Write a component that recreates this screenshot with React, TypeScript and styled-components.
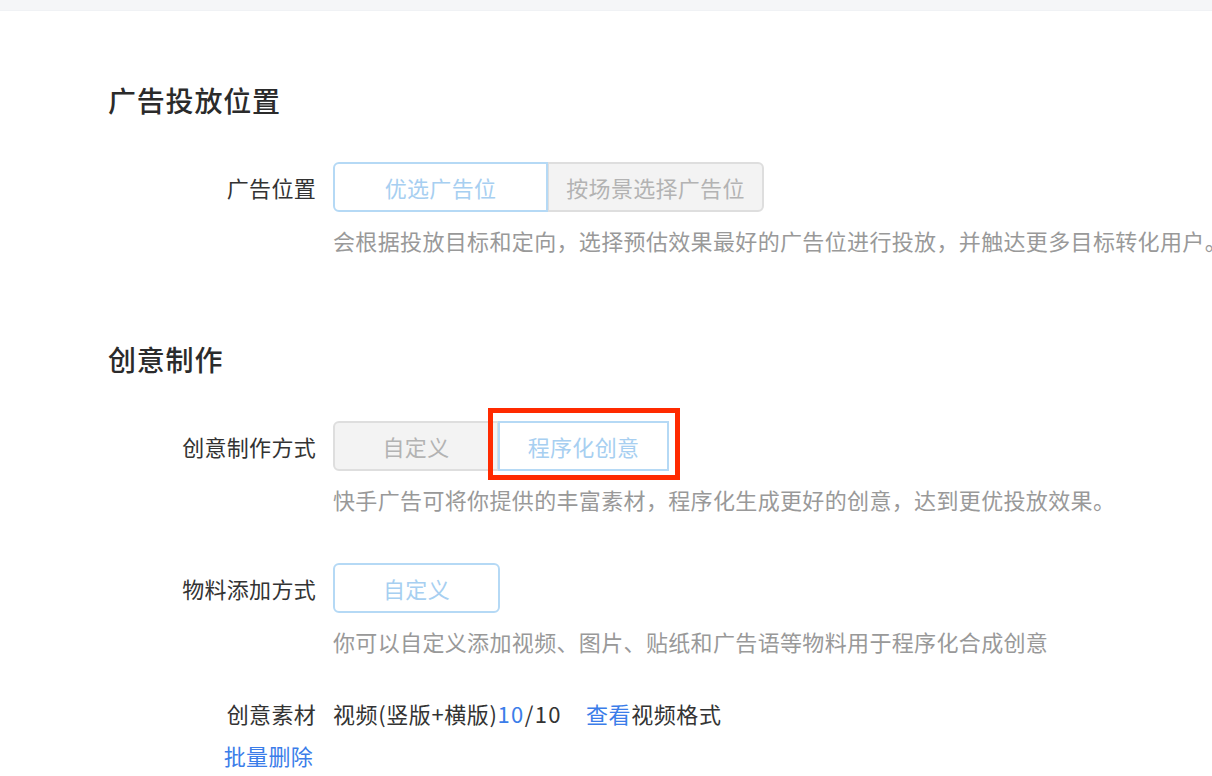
import React from "react";
import styled, { createGlobalStyle } from "styled-components";

const GlobalStyle = createGlobalStyle`
  html, body {
    margin: 0;
    padding: 0;
    background: #ffffff;
    font-family: "Noto Sans CJK SC", "Noto Sans", "Liberation Sans", sans-serif;
    color: #333333;
  }
  * {
    box-sizing: border-box;
  }
`;

const Page = styled.div`
  width: 1212px;
  height: 776px;
  overflow: hidden;
`;

const TopBar = styled.div`
  height: 11px;
  background: #f5f6f8;
  border-bottom: 1px solid #f0f2f5;
`;

const Content = styled.div`
  padding: 69px 0 0 108px;
`;

const Section = styled.section`
  margin-bottom: 84px;
`;

const Title = styled.h2`
  margin: 0 0 42px;
  font-size: 28px;
  line-height: 40px;
  font-weight: 500;
  letter-spacing: 0.8px;
  color: #2b2b2b;
`;

const FormItem = styled.div<{ $gap?: number }>`
  display: flex;
  margin-bottom: ${(p) => p.$gap ?? 0}px;
`;

const Label = styled.div<{ $link?: boolean }>`
  width: 208px;
  flex-shrink: 0;
  text-align: right;
  font-size: 22px;
  line-height: 50px;
  letter-spacing: 0.3px;
  padding-right: ${(p) => (p.$link ? 3 : 0)}px;
  color: ${(p) => (p.$link ? "#3b7de9" : "#333333")};
  white-space: nowrap;
`;

const TextLabel = styled(Label)`
  line-height: 30px;
`;

const Body = styled.div`
  margin-left: 17px;
  display: flex;
  flex-direction: column;
`;

const Group = styled.div`
  display: flex;
`;

const OptionWrap = styled.div`
  position: relative;
  display: flex;
  & + & {
    margin-left: -1px;
  }
`;

const Option = styled.div<{ $active?: boolean; $w: number; $pos: "first" | "last" | "only" | "mid" }>`
  width: ${(p) => p.$w}px;
  height: 50px;
  display: flex;
  align-items: center;
  justify-content: center;
  font-size: 22px;
  letter-spacing: 0.3px;
  color: ${(p) => (p.$active ? "#a7cff1" : "#b3b3b3")};
  background: ${(p) => (p.$active ? "#ffffff" : "#f3f3f3")};
  border: 2px solid ${(p) => (p.$active ? "#b5d9f5" : "#dedede")};
  border-radius: ${(p) =>
    p.$pos === "only"
      ? "6px"
      : p.$pos === "first"
      ? "6px 0 0 6px"
      : p.$pos === "last"
      ? "0 6px 6px 0"
      : "0"};
  position: relative;
  z-index: ${(p) => (p.$active ? 1 : 0)};
  white-space: nowrap;
`;

const Highlight = styled.div`
  position: absolute;
  top: -13px;
  left: -10px;
  right: -11px;
  bottom: -9px;
  border: 5px solid #ff2a00;
  z-index: 2;
  pointer-events: none;
`;

const Desc = styled.div`
  margin-top: 13px;
  font-size: 22px;
  line-height: 30px;
  letter-spacing: 0.35px;
  color: #999999;
  white-space: nowrap;
`;

const Line = styled.div`
  font-size: 22px;
  line-height: 30px;
  letter-spacing: 0.6px;
  color: #333333;
  white-space: nowrap;
`;

const Num = styled.span`
  letter-spacing: 1.4px;
`;

const Blue = styled.span`
  color: #3b7de9;
`;

const Spacer = styled.span`
  display: inline-block;
  width: 24px;
`;

export default function App() {
  return (
    <Page>
      <GlobalStyle />
      <TopBar />
      <Content>
        <Section>
          <Title>广告投放位置</Title>
          <FormItem>
            <Label>广告位置</Label>
            <Body>
              <Group>
                <OptionWrap>
                  <Option $active $w={215} $pos="first">
                    优选广告位
                  </Option>
                </OptionWrap>
                <OptionWrap>
                  <Option $w={217} $pos="last">
                    按场景选择广告位
                  </Option>
                </OptionWrap>
              </Group>
              <Desc>会根据投放目标和定向，选择预估效果最好的广告位进行投放，并触达更多目标转化用户。</Desc>
            </Body>
          </FormItem>
        </Section>

        <Section>
          <Title>创意制作</Title>
          <FormItem $gap={49}>
            <Label>创意制作方式</Label>
            <Body>
              <Group>
                <OptionWrap>
                  <Option $w={166} $pos="first">
                    自定义
                  </Option>
                </OptionWrap>
                <OptionWrap>
                  <Option $active $w={171} $pos="mid">
                    程序化创意
                  </Option>
                  <Highlight />
                </OptionWrap>
              </Group>
              <Desc>快手广告可将你提供的丰富素材，程序化生成更好的创意，达到更优投放效果。</Desc>
            </Body>
          </FormItem>

          <FormItem $gap={42}>
            <Label>物料添加方式</Label>
            <Body>
              <Group>
                <OptionWrap>
                  <Option $active $w={167} $pos="only">
                    自定义
                  </Option>
                </OptionWrap>
              </Group>
              <Desc>你可以自定义添加视频、图片、贴纸和广告语等物料用于程序化合成创意</Desc>
            </Body>
          </FormItem>

          <FormItem $gap={12}>
            <TextLabel>创意素材</TextLabel>
            <Body>
              <Line>
                视频(竖版+横版)
                <Num>
                  <Blue>10</Blue>/10
                </Num>
                <Spacer />
                <Blue>查看</Blue>视频格式
              </Line>
            </Body>
          </FormItem>
          <FormItem>
            <TextLabel $link>批量删除</TextLabel>
          </FormItem>
        </Section>
      </Content>
    </Page>
  );
}
